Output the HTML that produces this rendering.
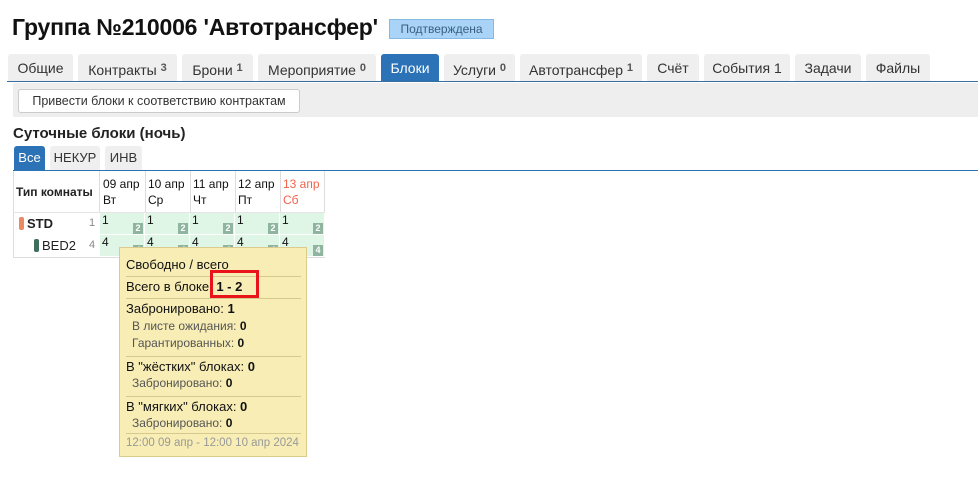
<!DOCTYPE html>
<html><head><meta charset="utf-8"><style>
*{box-sizing:border-box;margin:0;padding:0}
body{width:978px;height:502px;background:#fff;font-family:"Liberation Sans",sans-serif;font-size:13px;color:#222;position:relative;overflow:hidden}
.abs{position:absolute}
h1{position:absolute;left:12px;top:14px;font-size:23px;font-weight:bold;color:#111;letter-spacing:-0.2px}
.badge{left:389px;top:19px;width:105px;height:20px;background:#a9d3f7;border:1px solid #84b9e6;color:#3a5f80;font-size:12px;line-height:18px;text-align:center}
.tab{position:absolute;top:54px;height:27px;background:#efefef;border-radius:3px 3px 0 0;color:#333;font-size:14px;line-height:28px;text-align:center}
.tab sup{font-size:11px;color:#555;vertical-align:4px;font-weight:bold}
.tab.act{background:#2b72b6;color:#fff}
.line{position:absolute;height:2px;background:#3b6ea0}
.panel{left:13px;top:83px;width:965px;height:34px;background:#eee}
.btn{left:18px;top:89px;width:282px;height:24px;background:#fff;border:1px solid #ccc;border-radius:3px;font-size:12.5px;line-height:22px;text-align:center;color:#333}
.cell{position:absolute;background:#dff5e6;font-size:12px;line-height:14px;padding-left:2px;color:#111}
.sq{position:absolute;right:1px;bottom:0;width:10px;height:11px;background:#8fb4a0;color:#fff;font-size:9px;line-height:11px;text-align:center;font-weight:bold}
.hd{position:absolute;top:176px;font-size:12px;line-height:16px;color:#111}
.tip{left:119px;top:247px;width:188px;height:210px;background:#f7edb5;border:1px solid #d9cc8c;font-size:13px;color:#111}
.tip div{position:absolute;left:6px;white-space:nowrap}
.tip .s{left:12px;color:#555;font-size:12px}
.tip hr{position:absolute;left:6px;width:175px;border:0;border-top:1px solid #d6c98d}
</style></head><body>
<h1>Группа №210006 'Автотрансфер'</h1>
<div class="abs badge">Подтверждена</div>

<div class="tab" style="left:8px;width:65px">Общие</div>
<div class="tab" style="left:78px;width:99px">Контракты <sup>3</sup></div>
<div class="tab" style="left:182px;width:71px">Брони <sup>1</sup></div>
<div class="tab" style="left:258px;width:118px">Мероприятие <sup>0</sup></div>
<div class="tab act" style="left:381px;width:58px">Блоки</div>
<div class="tab" style="left:444px;width:71px">Услуги <sup>0</sup></div>
<div class="tab" style="left:520px;width:122px">Автотрансфер <sup>1</sup></div>
<div class="tab" style="left:647px;width:52px">Счёт</div>
<div class="tab" style="left:704px;width:86px">События 1</div>
<div class="tab" style="left:795px;width:66px">Задачи</div>
<div class="tab" style="left:866px;width:64px">Файлы</div>
<div class="line" style="left:7px;top:81px;width:971px;height:1px"></div>

<div class="abs panel"></div>
<div class="abs btn">Привести блоки к соответствию контрактам</div>

<div class="abs" style="left:13px;top:125px;font-size:15px;font-weight:bold;color:#222">Суточные блоки (ночь)</div>
<div class="tab act" style="left:14px;top:146px;height:24px;width:31px;line-height:24px;font-size:13px">Все</div>
<div class="tab" style="left:50px;top:146px;height:24px;width:50px;line-height:24px;font-size:13px">НЕКУР</div>
<div class="tab" style="left:105px;top:146px;height:24px;width:37px;line-height:24px;font-size:13px">ИНВ</div>
<div class="line" style="left:13px;top:170px;width:965px;height:1px;background:#2b72b6"></div>

<div class="abs" style="left:13px;top:171px;width:1px;height:87px;background:#ddd"></div>
<div class="abs" style="left:13px;top:257px;width:312px;height:1px;background:#ddd"></div>
<div class="abs" style="left:13px;top:212px;width:312px;height:1px;background:#e5e5e5"></div>
<div class="abs" style="left:16px;top:185px;font-weight:bold;font-size:12px">Тип комнаты</div>
<div class="abs" style="left:99px;top:171px;width:1px;height:41px;background:#ddd"></div>
<div class="abs" style="left:145px;top:171px;width:1px;height:41px;background:#ddd"></div>
<div class="abs" style="left:190px;top:171px;width:1px;height:41px;background:#ddd"></div>
<div class="abs" style="left:235px;top:171px;width:1px;height:41px;background:#ddd"></div>
<div class="abs" style="left:280px;top:171px;width:1px;height:41px;background:#ddd"></div>
<div class="abs" style="left:324px;top:171px;width:1px;height:41px;background:#ddd"></div>
<div class="hd" style="left:103px">09 апр<br>Вт</div>
<div class="hd" style="left:148px">10 апр<br>Ср</div>
<div class="hd" style="left:193px">11 апр<br>Чт</div>
<div class="hd" style="left:238px">12 апр<br>Пт</div>
<div class="hd" style="left:283px;color:#f0624a">13 апр<br>Сб</div>

<div class="abs" style="left:19px;top:217px;width:5px;height:13px;border-radius:2px;background:#e98a64"></div>
<div class="abs" style="left:27px;top:216px;font-weight:bold;font-size:13px">STD</div>
<div class="abs" style="left:89px;top:217px;font-size:11px;color:#888">1</div>
<div class="abs" style="left:34px;top:239px;width:5px;height:13px;border-radius:2px;background:#3f6e5c"></div>
<div class="abs" style="left:42px;top:238px;font-size:13px">BED2</div>
<div class="abs" style="left:89px;top:239px;font-size:11px;color:#888">4</div>

<div class="cell" style="left:100px;top:213px;width:44px;height:21px">1<span class="sq">2</span></div>
<div class="cell" style="left:145px;top:213px;width:44px;height:21px">1<span class="sq">2</span></div>
<div class="cell" style="left:190px;top:213px;width:44px;height:21px">1<span class="sq">2</span></div>
<div class="cell" style="left:235px;top:213px;width:44px;height:21px">1<span class="sq">2</span></div>
<div class="cell" style="left:280px;top:213px;width:44px;height:21px">1<span class="sq">2</span></div>
<div class="cell" style="left:100px;top:235px;width:44px;height:21px">4<span class="sq">4</span></div>
<div class="cell" style="left:145px;top:235px;width:44px;height:21px">4<span class="sq">4</span></div>
<div class="cell" style="left:190px;top:235px;width:44px;height:21px">4<span class="sq">4</span></div>
<div class="cell" style="left:235px;top:235px;width:44px;height:21px">4<span class="sq">4</span></div>
<div class="cell" style="left:280px;top:235px;width:44px;height:21px">4<span class="sq">4</span></div>

<div class="abs tip">
<div style="top:9px">Свободно / всего</div>
<hr style="top:28px">
<div style="top:31px">Всего в блоке: <b>1 - 2</b></div>
<hr style="top:50px">
<div style="top:53px">Забронировано: <b>1</b></div>
<div class="s" style="top:71px">В листе ожидания: <b style="color:#111">0</b></div>
<div class="s" style="top:88px">Гарантированных: <b style="color:#111">0</b></div>
<hr style="top:108px">
<div style="top:111px">В "жёстких" блоках: <b>0</b></div>
<div class="s" style="top:128px">Забронировано: <b style="color:#111">0</b></div>
<hr style="top:148px">
<div style="top:151px">В "мягких" блоках: <b>0</b></div>
<div class="s" style="top:168px">Забронировано: <b style="color:#111">0</b></div>
<hr style="top:185px">
<div style="top:189px;color:#999;font-size:11.5px">12:00 09 апр - 12:00 10 апр 2024</div>
</div>
<div class="abs" style="left:210px;top:270px;width:49px;height:28px;border:3px solid #e8141a"></div>
</body></html>
